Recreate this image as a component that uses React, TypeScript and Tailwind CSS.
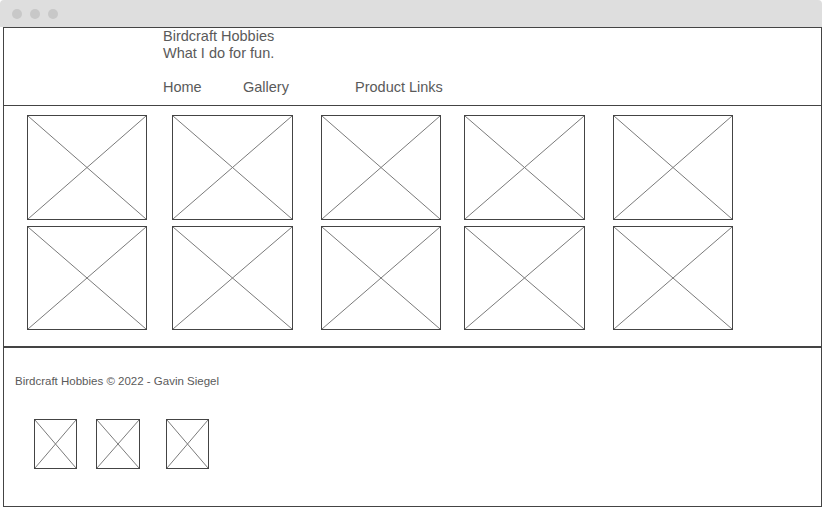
import React from "react";

const cols = [
  { w: "w-[120px]", ml: "" },
  { w: "w-[121px]", ml: "ml-[25px]" },
  { w: "w-[120px]", ml: "ml-[28px]" },
  { w: "w-[121px]", ml: "ml-[23px]" },
  { w: "w-[120px]", ml: "ml-[28px]" },
];

const rows = ["h-[105px]", "h-[104px]"];

const icons = [
  { w: "w-[43px]", ml: "" },
  { w: "w-[44px]", ml: "ml-[19px]" },
  { w: "w-[43px]", ml: "ml-[26px]" },
];

function Placeholder({ className }: { className: string }) {
  return (
    <div className={`border border-[#444] bg-white ${className}`}>
      <svg className="w-full h-full block" viewBox="0 0 100 100" preserveAspectRatio="none">
        <line x1="0" y1="0" x2="100" y2="100" stroke="#7a7a7a" strokeWidth="1" vectorEffect="non-scaling-stroke" />
        <line x1="100" y1="0" x2="0" y2="100" stroke="#7a7a7a" strokeWidth="1" vectorEffect="non-scaling-stroke" />
      </svg>
    </div>
  );
}

export default function App() {
  return (
    <div className="w-[822px] h-[508px] bg-white font-['Liberation_Sans',Arial,sans-serif] text-[#5a5a5a]">
      {/* window bar */}
      <div className="h-[27px] bg-[#dedede] rounded-t-[4px] flex items-center pl-[12px] gap-[8px]">
        <span className="w-[10px] h-[10px] rounded-full bg-[#c8c8c8]" />
        <span className="w-[10px] h-[10px] rounded-full bg-[#c8c8c8]" />
        <span className="w-[10px] h-[10px] rounded-full bg-[#c8c8c8]" />
      </div>

      <div className="ml-[3px] w-[819px] h-[480px] border border-[#444] flex flex-col">
        {/* header */}
        <header className="h-[78px] border-b border-[#444] pl-[159px] text-[14.5px] leading-[17px]">
          <p>Birdcraft Hobbies</p>
          <p>What I do for fun.</p>
          <nav className="flex mt-[16px] leading-[18px]">
            <a className="w-[80px]">Home</a>
            <a className="w-[112px]">Gallery</a>
            <a>Product Links</a>
          </nav>
        </header>

        {/* gallery */}
        <section className="h-[242px] border-b-2 border-[#444] pt-[9px] pl-[23px] flex flex-col gap-[6px]">
          {rows.map((h, r) => (
            <div key={r} className="flex">
              {cols.map((c, i) => (
                <Placeholder key={i} className={`${c.w} ${c.ml} ${h}`} />
              ))}
            </div>
          ))}
        </section>

        {/* footer */}
        <footer className="flex-1 pl-[11px] pt-[25px]">
          <p className="text-[11.5px] leading-[16px]">Birdcraft Hobbies © 2022 - Gavin Siegel</p>
          <div className="flex mt-[30px] ml-[19px]">
            {icons.map((c, i) => (
              <Placeholder key={i} className={`${c.w} ${c.ml} h-[50px]`} />
            ))}
          </div>
        </footer>
      </div>
    </div>
  );
}
